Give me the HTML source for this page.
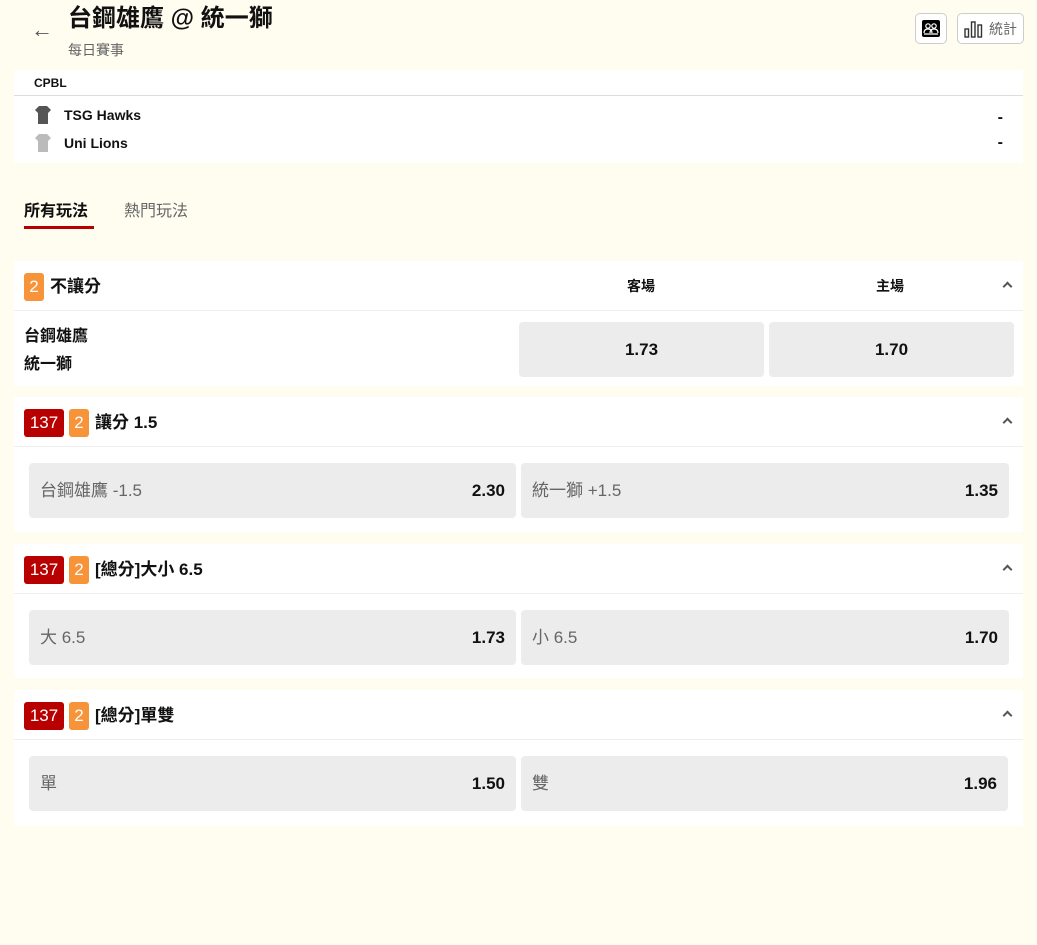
<!DOCTYPE html>
<html><head><meta charset="utf-8"><style>
*{box-sizing:border-box;margin:0;padding:0}
body{width:1037px;height:945px;background:#fffcf0;font-family:"Liberation Sans","Noto Sans CJK TC",sans-serif;color:#111;position:relative;overflow:hidden}
.a{position:absolute}
.card{position:absolute;left:14px;width:1009px;background:#fff}
.hdr{position:absolute;left:0;right:0;top:0;height:50px;border-bottom:1px solid #eee}
.badge{position:absolute;top:12px;height:28px;border-radius:3px;color:#fff;font-size:17px;line-height:28px;text-align:center}
.red{background:#b80000;width:40px;left:10px}
.org{background:#f7943a;width:20px}
.ttl{position:absolute;top:12px;font-size:17px;line-height:28px;font-weight:bold}
.btn{position:absolute;background:#ececec;border-radius:4px;height:55px}
.btn .l{position:absolute;left:11px;top:0;line-height:55px;font-size:17px;color:#666}
.btn .r{position:absolute;right:11px;top:0;line-height:55px;font-size:17px;font-weight:bold}
.car{position:absolute;right:12px;top:22px;width:7px;height:7px;border-left:2px solid #555;border-top:2px solid #555;transform:rotate(45deg)}
</style></head><body>
<div class="a" style="left:31px;top:19px;font-size:22px;line-height:22px;color:#555">←</div>
<div class="a" style="left:68px;top:5px;font-size:24px;line-height:28px;font-weight:bold">台鋼雄鷹 @ 統一獅</div>
<div class="a" style="left:68px;top:40px;font-size:14px;line-height:20px;color:#666">每日賽事</div>
<div class="a" style="left:915px;top:13px;width:32px;height:31px;border:1px solid #ccc;border-radius:5px;background:#fff"><div style="position:absolute;left:6px;top:6px;width:18px;height:17px;background:#000;border-radius:2px"><svg width="18" height="17"><g fill="none" stroke="#fff" stroke-width="1.2"><circle cx="6" cy="6" r="2.2"/><circle cx="12" cy="6" r="2.2"/><path d="M2 13c0-3 2-4 4-4s4 1 4 4M8 13c0-3 2-4 4-4s4 1 4 4M2 14h14"/></g></svg></div></div>
<div class="a" style="left:957px;top:13px;width:67px;height:31px;border:1px solid #ccc;border-radius:5px;background:#fff">
<svg class="a" style="left:6px;top:6px" width="20" height="18"><g fill="none" stroke="#333" stroke-width="1.4"><rect x="1" y="9" width="3.5" height="8"/><rect x="7.5" y="2" width="3.5" height="15"/><rect x="14" y="5" width="3.5" height="12"/></g></svg>
<div class="a" style="left:31px;top:5px;font-size:14px;line-height:20px;color:#666">統計</div></div>

<div class="card" style="top:70px;height:93px">
<div class="a" style="left:20px;top:5px;font-size:12px;line-height:16px;font-weight:bold">CPBL</div>
<div class="a" style="left:0;right:0;top:25px;border-top:1px solid #ddd"></div>
<svg class="a" style="left:21px;top:36px" width="16" height="18"><path d="M4 0h8l4 4-3 3v11H3V7L0 4z" fill="#555"/></svg>
<svg class="a" style="left:21px;top:64px" width="16" height="18"><path d="M4 0h8l4 4-3 3v11H3V7L0 4z" fill="#bbb"/></svg>
<div class="a" style="left:50px;top:36px;font-size:14px;line-height:18px;font-weight:bold">TSG Hawks</div>
<div class="a" style="left:50px;top:64px;font-size:14px;line-height:18px;font-weight:bold">Uni Lions</div>
<div class="a" style="right:20px;top:39px;font-size:16px;line-height:18px;font-weight:bold">-</div>
<div class="a" style="right:20px;top:64px;font-size:16px;line-height:18px;font-weight:bold">-</div>
</div>

<div class="a" style="left:24px;top:201px;font-size:16px;line-height:22px;font-weight:bold">所有玩法</div>
<div class="a" style="left:24px;top:226px;width:70px;height:3px;background:#b80000"></div>
<div class="a" style="left:124px;top:201px;font-size:16px;line-height:22px;color:#666">熱門玩法</div>

<div class="card" style="top:261px;height:125px">
<div class="hdr"><div class="badge org" style="left:10px">2</div><div class="ttl" style="left:36px">不讓分</div>
<div class="a" style="left:613px;top:15px;font-size:14px;line-height:20px;font-weight:bold">客場</div>
<div class="a" style="left:862px;top:15px;font-size:14px;line-height:20px;font-weight:bold">主場</div><div class="car"></div></div>
<div class="a" style="left:10px;top:65px;font-size:16px;line-height:22px;font-weight:bold">台鋼雄鷹</div>
<div class="a" style="left:10px;top:93px;font-size:16px;line-height:22px;font-weight:bold">統一獅</div>
<div class="btn" style="left:505px;top:61px;width:245px"><div class="a" style="width:100%;top:0;line-height:55px;text-align:center;font-size:17px;font-weight:bold">1.73</div></div>
<div class="btn" style="left:755px;top:61px;width:245px"><div class="a" style="width:100%;top:0;line-height:55px;text-align:center;font-size:17px;font-weight:bold">1.70</div></div>
</div>

<div class="card" style="top:397px;height:135px">
<div class="hdr"><div class="badge red">137</div><div class="badge org" style="left:55px">2</div><div class="ttl" style="left:81px">讓分 1.5</div><div class="car"></div></div>
<div class="btn" style="left:15px;top:66px;width:487px"><span class="l">台鋼雄鷹 -1.5</span><span class="r">2.30</span></div>
<div class="btn" style="left:507px;top:66px;width:488px"><span class="l">統一獅 +1.5</span><span class="r">1.35</span></div>
</div>

<div class="card" style="top:544px;height:134px">
<div class="hdr"><div class="badge red">137</div><div class="badge org" style="left:55px">2</div><div class="ttl" style="left:81px">[總分]大小 6.5</div><div class="car"></div></div>
<div class="btn" style="left:15px;top:66px;width:487px"><span class="l">大 6.5</span><span class="r">1.73</span></div>
<div class="btn" style="left:507px;top:66px;width:488px"><span class="l">小 6.5</span><span class="r">1.70</span></div>
</div>

<div class="card" style="top:690px;height:136px">
<div class="hdr"><div class="badge red">137</div><div class="badge org" style="left:55px">2</div><div class="ttl" style="left:81px">[總分]單雙</div><div class="car"></div></div>
<div class="btn" style="left:15px;top:66px;width:487px"><span class="l">單</span><span class="r">1.50</span></div>
<div class="btn" style="left:507px;top:66px;width:487px"><span class="l">雙</span><span class="r">1.96</span></div>
</div>
</body></html>
